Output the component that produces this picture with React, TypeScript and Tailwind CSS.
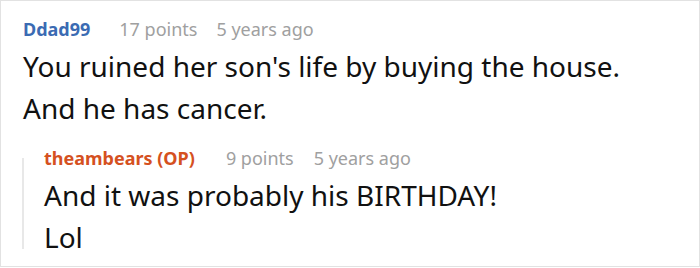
export default function App() {
  return (
    <div className="w-[700px] h-[268px] bg-white font-['Noto_Sans',sans-serif]">
      <div className="h-[267px] border border-[#e2e2e2] pl-[22px] pt-[15px]">
        <div className="flex items-baseline text-[18px] leading-[26px]">
          <span className="font-bold text-[#3b6bb3]">Ddad99</span>
          <span className="ml-[29px] text-[#a0a0a0]">17 points</span>
          <span className="ml-[19px] text-[#a0a0a0]">5 years ago</span>
        </div>
        <div className="text-[28px] leading-[42px] text-[#111] mt-[3px]">
          <p>You ruined her son's life by buying the house.</p>
          <p>And he has cancer.</p>
        </div>
        <div className="mt-[16px] flex">
          <div className="w-[2px] -ml-[1px] bg-[#e8e8e8] mt-[13px] mb-[9px]" />
          <div className="pl-[20px]">
            <div className="flex items-baseline text-[18px] leading-[26px]">
              <span className="font-bold text-[#d5511f]">theambears (OP)</span>
              <span className="ml-[31px] text-[#a0a0a0]">9 points</span>
              <span className="ml-[20px] text-[#a0a0a0]">5 years ago</span>
            </div>
            <div className="text-[28px] leading-[42px] text-[#111] mt-[3px]">
              <p>And it was probably his BIRTHDAY!</p>
              <p>Lol</p>
            </div>
          </div>
        </div>
      </div>
    </div>
  );
}
